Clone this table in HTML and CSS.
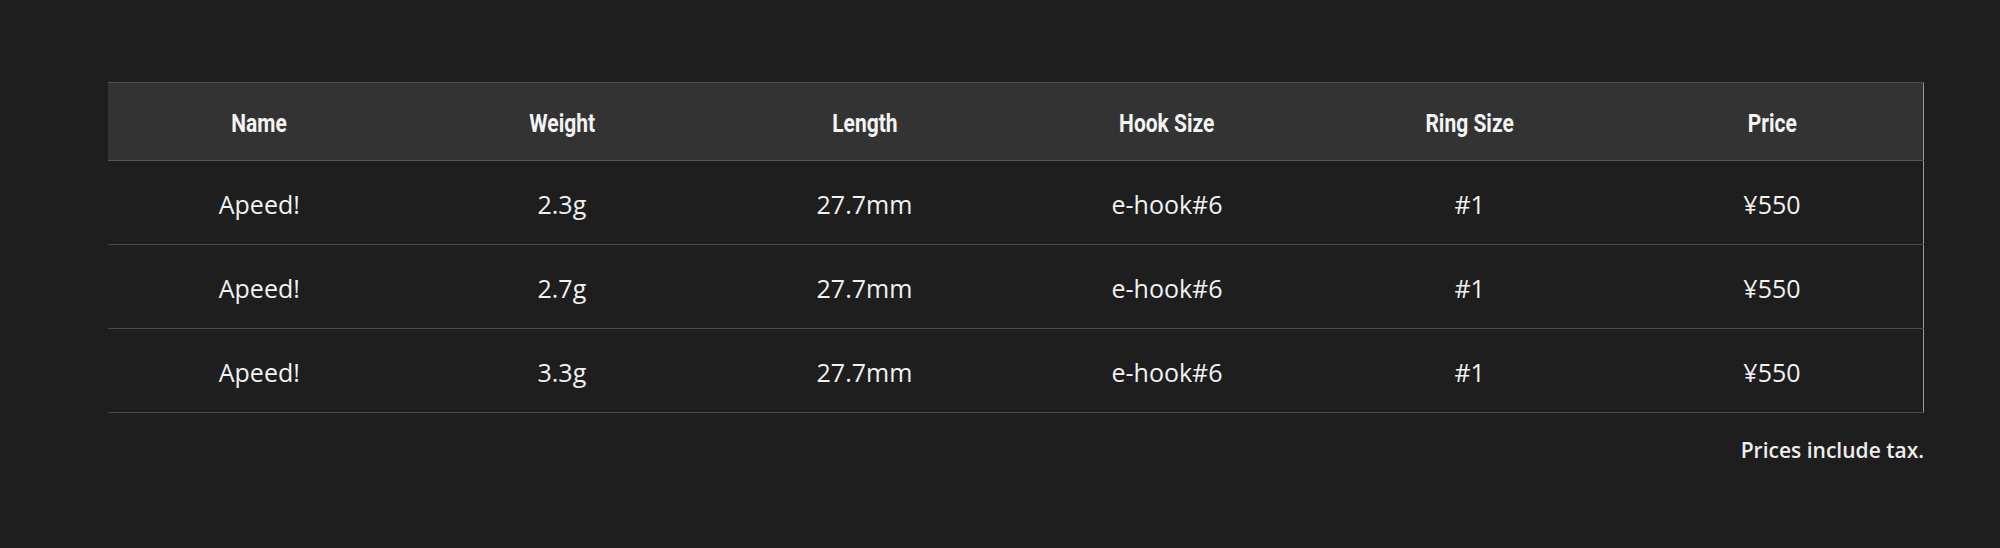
FILE: index.html
```html
<!DOCTYPE html>
<html lang="ja">
<head>
<meta charset="utf-8">
<title>Spec table</title>
<link rel="stylesheet" href="styles.css">
</head>
<body>
<main class="page">
  <section class="spec">
    <table class="spec-table">
      <thead>
        <tr>
          <th><span class="head-label">Name</span></th>
          <th><span class="head-label">Weight</span></th>
          <th><span class="head-label">Length</span></th>
          <th><span class="head-label">Hook Size</span></th>
          <th><span class="head-label">Ring Size</span></th>
          <th><span class="head-label">Price</span></th>
        </tr>
      </thead>
      <tbody>
        <tr>
          <td>Apeed!</td><td>2.3g</td><td>27.7mm</td><td>e-hook#6</td><td>#1</td><td>¥550</td>
        </tr>
        <tr>
          <td>Apeed!</td><td>2.7g</td><td>27.7mm</td><td>e-hook#6</td><td>#1</td><td>¥550</td>
        </tr>
        <tr>
          <td>Apeed!</td><td>3.3g</td><td>27.7mm</td><td>e-hook#6</td><td>#1</td><td>¥550</td>
        </tr>
      </tbody>
    </table>
    <p class="note">Prices include tax.</p>
  </section>
</main>
</body>
</html>
```

FILE: styles.css
```css
html, body {
  margin: 0;
  padding: 0;
  background: #1e1e1e;
}

.page {
  padding: 82px 0 0 108px;
}

.spec {
  width: 1816px;
}

.spec-table {
  width: 100%;
  border-collapse: collapse;
  table-layout: fixed;
  border-right: 1px solid #9a9a9a;
  color: #f2f2f2;
}

.spec-table th {
  height: 77px;
  padding: 0;
  background: #333333;
  border-top: 1px solid #4e4e4e;
  border-bottom: 1px solid #555555;
  font-family: Roboto, "Liberation Sans", sans-serif;
  font-weight: bold;
  font-size: 25px;
  text-align: center;
  vertical-align: middle;
  color: #f4f4f4;
}

.head-label {
  display: inline-block;
  transform: scale(0.84, 1.02);
  padding-top: 3px;
}

.spec-table td {
  height: 84px;
  padding: 2px 0 0;
  box-sizing: border-box;
  border-bottom: 1px solid #4a4a4a;
  font-family: "Open Sans", "Noto Sans", sans-serif;
  font-size: 25px;
  font-weight: 500;
  text-align: center;
  vertical-align: middle;
}

.note {
  margin: 22px 0 0;
  text-align: right;
  font-family: "Open Sans", "Noto Sans", sans-serif;
  font-size: 21px;
  font-weight: 600;
  line-height: 30px;
  color: #eeeeee;
}
```
